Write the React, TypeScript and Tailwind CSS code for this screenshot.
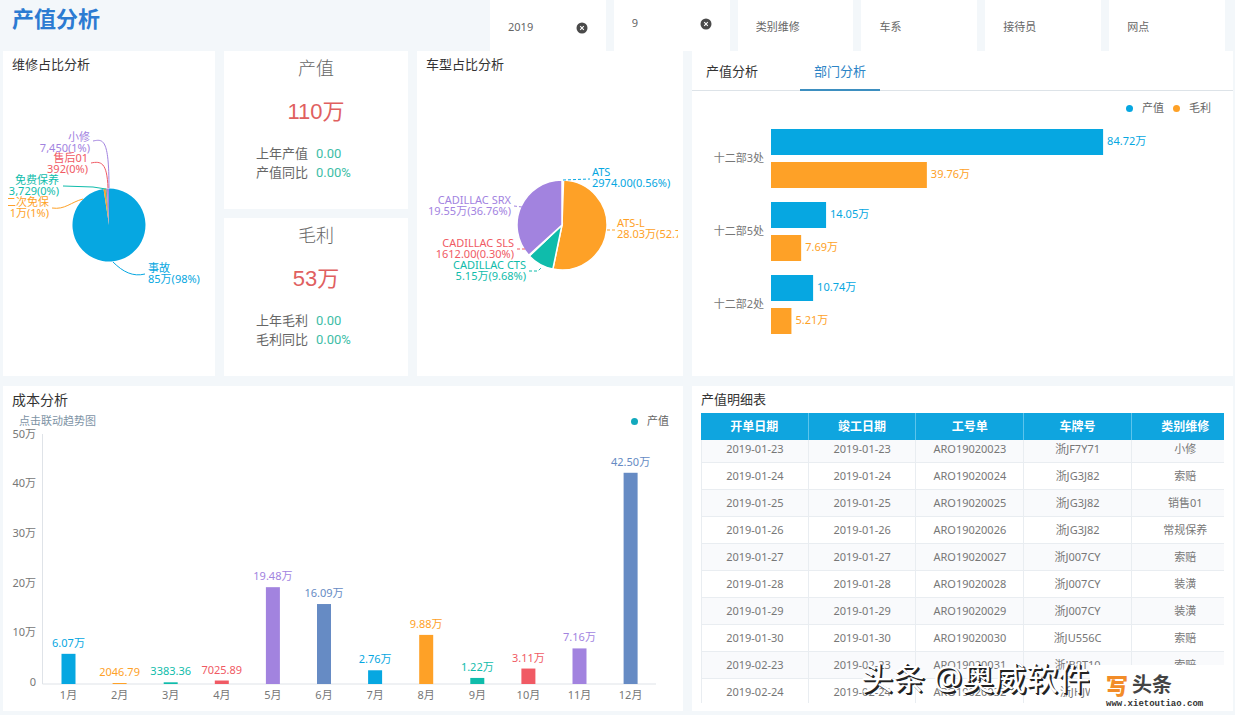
import { useState } from 'react'
import type { ReactNode } from 'react'
import { clsx } from 'clsx'

const BLUE = '#06a7e1'
const ORANGE = '#fea127'
const TEAL = '#0fbcab'
const RED = '#f05a64'
const PURPLE = '#a283df'
const STEEL = '#668bc4'

const PALETTE = [BLUE, ORANGE, TEAL, RED, PURPLE, STEEL]

const filters = [
  { id: 'year', label: '年份', initial: '2019', clearable: true },
  { id: 'month', label: '月份', initial: '9', clearable: true, raised: true },
  { id: 'category', label: '类别维修', initial: '' },
  { id: 'series', label: '车系', initial: '' },
  { id: 'receptionist', label: '接待员', initial: '' },
  { id: 'branch', label: '网点', initial: '' },
]

const departments = [
  { name: '十二部3处', output: 84.72, profit: 39.76 },
  { name: '十二部5处', output: 14.05, profit: 7.69 },
  { name: '十二部2处', output: 10.74, profit: 5.21 },
]

const months = [
  { value: 6.07, label: '6.07万' },
  { value: 0.2, label: '2046.79' },
  { value: 0.34, label: '3383.36' },
  { value: 0.7, label: '7025.89' },
  { value: 19.48, label: '19.48万' },
  { value: 16.09, label: '16.09万' },
  { value: 2.76, label: '2.76万' },
  { value: 9.88, label: '9.88万' },
  { value: 1.22, label: '1.22万' },
  { value: 3.11, label: '3.11万' },
  { value: 7.16, label: '7.16万' },
  { value: 42.5, label: '42.50万' },
]

const columns = ['开单日期', '竣工日期', '工号单', '车牌号', '类别维修']

const orders = [
  ['2019-01-23', '2019-01-23', 'ARO19020023', '浙JF7Y71', '小修'],
  ['2019-01-24', '2019-01-24', 'ARO19020024', '浙JG3J82', '索赔'],
  ['2019-01-25', '2019-01-25', 'ARO19020025', '浙JG3J82', '销售01'],
  ['2019-01-26', '2019-01-26', 'ARO19020026', '浙JG3J82', '常规保养'],
  ['2019-01-27', '2019-01-27', 'ARO19020027', '浙J007CY', '索赔'],
  ['2019-01-28', '2019-01-28', 'ARO19020028', '浙J007CY', '装潢'],
  ['2019-01-29', '2019-01-29', 'ARO19020029', '浙J007CY', '装潢'],
  ['2019-01-30', '2019-01-30', 'ARO19020030', '浙JU556C', '索赔'],
  ['2019-02-23', '2019-02-23', 'ARO19020031', '浙JB8T10', '索赔'],
  ['2019-02-24', '2019-02-24', 'ARO19020032', '浙JHJW', ''],
]

type Slice = { value: number; color: string }

type PieLabel = {
  x: number
  y: number
  lines: [string, string]
  color: string
  anchor: 'start' | 'end'
  leader: string
}

const repairSlices: Slice[] = [
  { value: 97.6, color: BLUE },
  { value: 0.9, color: ORANGE },
  { value: 0.4, color: TEAL },
  { value: 0.2, color: RED },
  { value: 0.9, color: PURPLE },
]

const repairLabels: PieLabel[] = [
  { x: 87, y: 57, lines: ['小修', '7,450(1%)'], color: PURPLE, anchor: 'end', leader: 'M90 61 C100 59 106 58 106 108' },
  { x: 85, y: 78, lines: ['售后01', '392(0%)'], color: RED, anchor: 'end', leader: 'M88 83 C98 81 104 82 105 108' },
  { x: 56, y: 100, lines: ['免费保养', '3,729(0%)'], color: TEAL, anchor: 'end', leader: 'M60 106 L90 107 L103 109' },
  { x: 46, y: 122, lines: ['二次免保', '1万(1%)'], color: ORANGE, anchor: 'end', leader: 'M49 128 C62 130 68 122 80 119' },
  { x: 145, y: 188, lines: ['事故', '85万(98%)'], color: BLUE, anchor: 'start', leader: 'M110 182 C120 192 130 197 142 194' },
]

const modelSlices: Slice[] = [
  { value: 0.56, color: BLUE },
  { value: 52.7, color: ORANGE },
  { value: 9.68, color: TEAL },
  { value: 0.3, color: RED },
  { value: 36.76, color: PURPLE },
]

const modelLabels: PieLabel[] = [
  { x: 175, y: 92, lines: ['ATS', '2974.00(0.56%)'], color: BLUE, anchor: 'start', leader: 'M146 100 L173 99' },
  { x: 200, y: 143, lines: ['ATS-L', '28.03万(52.70%)'], color: ORANGE, anchor: 'start', leader: 'M190 150 L198 150' },
  { x: 94, y: 120, lines: ['CADILLAC SRX', '19.55万(36.76%)'], color: PURPLE, anchor: 'end', leader: 'M97 126 L105 127' },
  { x: 97, y: 163, lines: ['CADILLAC SLS', '1612.00(0.30%)'], color: RED, anchor: 'end', leader: 'M100 169 L110 169' },
  { x: 109, y: 185, lines: ['CADILLAC CTS', '5.15万(9.68%)'], color: TEAL, anchor: 'end', leader: 'M112 191 L121 191 L125 187' },
]

// Paths run clockwise, starting at twelve o'clock.
function slicePaths(slices: Slice[], cx: number, cy: number, r: number) {
  const total = slices.reduce((sum, s) => sum + s.value, 0)
  let acc = 0
  return slices.map((s) => {
    const a0 = (acc / total) * Math.PI * 2
    acc += s.value
    const a1 = (acc / total) * Math.PI * 2
    const large = a1 - a0 > Math.PI ? 1 : 0
    const p = (a: number) => `${(cx + r * Math.sin(a)).toFixed(2)} ${(cy - r * Math.cos(a)).toFixed(2)}`
    return { color: s.color, d: `M${cx} ${cy} L${p(a0)} A${r} ${r} 0 ${large} 1 ${p(a1)} Z` }
  })
}

type PieProps = {
  title: string
  viewBox: string
  cx: number
  cy: number
  r: number
  slices: Slice[]
  labels: PieLabel[]
  separated?: boolean
}

function Pie({ title, viewBox, cx, cy, r, slices, labels, separated }: PieProps) {
  return (
    <div className="px-[5px]">
      <svg viewBox={viewBox} role="img" aria-label={title} className="block h-auto w-full text-[11px]">
        {slicePaths(slices, cx, cy, r).map((s) => (
          <path key={s.color} d={s.d} fill={s.color} stroke={separated ? '#fff' : 'none'} strokeWidth={1.5} />
        ))}
        {labels.map((l) => (
          <g key={l.lines[0]}>
            <path d={l.leader} fill="none" stroke={l.color} strokeDasharray={separated ? '3 2' : undefined} />
            <text x={l.x} y={l.y + 4} fill={l.color} textAnchor={l.anchor}>
              {l.lines[0]}
            </text>
            <text x={l.x} y={l.y + 15} fill={l.color} textAnchor={l.anchor}>
              {l.lines[1]}
            </text>
          </g>
        ))}
      </svg>
    </div>
  )
}

type PanelProps = { title: string; large?: boolean; className?: string; children: ReactNode }

function Panel({ title, large, className, children }: PanelProps) {
  return (
    <section className={clsx('overflow-hidden bg-white', className)}>
      <h2 className={clsx('px-[9px] leading-[27px] text-[#333]', large ? 'text-sm' : 'text-[13px]')}>{title}</h2>
      {children}
    </section>
  )
}

function Filter({ id, label, initial, clearable, raised }: (typeof filters)[number]) {
  const [value, setValue] = useState(initial)

  return (
    <div className={clsx('flex h-[51px] min-w-0 flex-1 items-center bg-white px-[18px]', raised ? 'pb-1' : 'pt-1')}>
      <input
        id={id}
        aria-label={label}
        placeholder={label}
        value={value}
        onChange={(e) => setValue(e.target.value)}
        className="w-full min-w-0 flex-1 bg-transparent text-[11px] text-[#666] outline-none placeholder:text-[#666]"
      />
      {clearable && (
        <button type="button" aria-label={`清除${label}`} onClick={() => setValue('')} className="shrink-0">
          <svg viewBox="0 0 12 12" className="size-3">
            <circle cx="6" cy="6" r="5.5" fill="#4a4a4a" />
            <path d="M4.2 4.2 L7.8 7.8 M7.8 4.2 L4.2 7.8" stroke="#fff" strokeWidth="1.1" />
          </svg>
        </button>
      )}
    </div>
  )
}

type KpiProps = { title: string; total: string; rows: [string, string][] }

function Kpi({ title, total, rows }: KpiProps) {
  return (
    <section className="flex-1 bg-white">
      <h2 className="text-center text-lg leading-[34px] font-light text-[#666]">{title}</h2>
      <p className="text-center font-['Liberation_Sans','Noto_Sans_CJK_SC',sans-serif] text-[22px] leading-[54px] text-[#e0605f]">
        {total}
      </p>
      <dl className="mt-[5px] text-[13px] leading-[19px]">
        {rows.map(([name, value]) => (
          <div key={name} className="grid grid-cols-2">
            <dt className="pr-2 text-right text-[#666]">{name}</dt>
            <dd className="font-[Roboto,sans-serif] text-[#3dbda6]">{value}</dd>
          </div>
        ))}
      </dl>
    </section>
  )
}

function Legend({ items }: { items: [string, string][] }) {
  return (
    <ul className="flex items-center gap-[9px] text-[11px] text-[#666]">
      {items.map(([name, color]) => (
        <li key={name} className="flex items-center gap-[9px]">
          <span className="size-[7px] rounded-full" style={{ backgroundColor: color }} />
          {name}
        </li>
      ))}
    </ul>
  )
}

function DepartmentChart() {
  return (
    <svg viewBox="0 0 541 251" role="img" aria-label="部门分析" className="block h-auto w-full text-[11px]">
      {departments.map((d, i) => {
        const top = 4 + i * 73
        const bars = [
          { value: d.output, color: BLUE, y: top },
          { value: d.profit, color: ORANGE, y: top + 33 },
        ]
        return (
          <g key={d.name}>
            <text x={72} y={top + 33} textAnchor="end" fill="#777">
              {d.name}
            </text>
            {bars.map((b) => (
              <g key={b.color}>
                <rect x={79} y={b.y} width={b.value * 3.92} height={26} fill={b.color} />
                <text x={83 + b.value * 3.92} y={b.y + 16} fill={b.color}>
                  {b.value.toFixed(2)}万
                </text>
              </g>
            ))}
          </g>
        )
      })}
    </svg>
  )
}

function CostChart() {
  const base = 254
  const scale = 4.97

  return (
    <svg viewBox="0 0 680 281" role="img" aria-label="成本分析" className="block h-auto w-full overflow-visible text-[11px]">
      <path d="M39.5 4 V254 H653" fill="none" stroke="#dfe3e8" />
      {[50, 40, 30, 20, 10, 0].map((tick) => (
        <text key={tick} x={33} y={base + 2 - tick * scale} textAnchor="end" fill="#777">
          {tick === 0 ? '0' : `${tick}万`}
        </text>
      ))}
      {months.map((m, i) => {
        const x = 65.5 + i * 51.1
        const height = m.value * scale
        const color = PALETTE[i % PALETTE.length]
        return (
          <g key={m.label}>
            <rect x={x - 7} y={base - height} width={14} height={height} fill={color} />
            <text x={x} y={base - height - 7} textAnchor="middle" fill={color}>
              {m.label}
            </text>
            <text x={x} y={269} textAnchor="middle" fill="#777">
              {i + 1}月
            </text>
          </g>
        )
      })}
    </svg>
  )
}

function OrderTable() {
  return (
    <div className="mx-[9px] h-[290px] overflow-hidden">
      <table className="w-[103%] table-fixed border-separate border-spacing-0 text-center">
        <thead>
          <tr className="h-[27px] bg-[#0fa5df] text-xs text-white">
            {columns.map((c) => (
              <th key={c} scope="col" className="border-r border-[#5cc4ec] p-0 font-bold">
                {c}
              </th>
            ))}
          </tr>
        </thead>
        <tbody className="text-[11px] leading-4 text-[#777]">
          {orders.map((row) => (
            <tr key={row[2]} className="group h-[27px] first:h-[23px] odd:bg-[#f9fafc]">
              {row.map((cell, i) => (
                <td key={i} className="border-r border-b border-[#e9edf1] p-0 group-first:pb-1 first:border-l">
                  {cell}
                </td>
              ))}
            </tr>
          ))}
        </tbody>
      </table>
    </div>
  )
}

function Watermark() {
  return (
    <div className="pointer-events-none absolute right-[9px] bottom-2 flex items-end">
      <p className="text-[32px] leading-[50px] whitespace-nowrap text-white [text-shadow:2px_2px_0_#222,1px_1px_0_#222]">
        头条 @奥威软件
      </p>
      <div className="flex h-[38px] w-[134px] flex-col bg-white pt-[5px] pl-4">
        <p className="flex items-center gap-1 font-['Noto_Sans_CJK_SC',sans-serif] leading-5">
          <span className="text-[22px] font-black text-[#f28c28]">写</span>
          <span className="text-xl font-bold text-[#444]">头条</span>
        </p>
        <p className="font-['Liberation_Mono',monospace] text-[9px] leading-3 font-bold text-[#333]">
          www.xietoutiao.com
        </p>
      </div>
    </div>
  )
}

export default function App() {
  const [tab, setTab] = useState('部门分析')

  return (
    <div className="min-h-screen bg-[#f3f7fa] pb-1 font-['Noto_Sans','Noto_Sans_CJK_SC',sans-serif]">
      <header className="flex pr-[10px]">
        <h1 className="w-[490px] shrink-0 pl-3 text-[22px] leading-9 font-bold text-[#2c7bd2]">产值分析</h1>
        <div className="flex min-w-0 flex-1 gap-2">
          {filters.map((f) => (
            <Filter key={f.id} {...f} />
          ))}
        </div>
      </header>

      <main className="grid grid-cols-[minmax(0,212fr)_minmax(0,184fr)_minmax(0,266fr)_minmax(0,541fr)] gap-x-[9px] gap-y-[10px] pr-0.5 pl-[3px]">
        <Panel title="维修占比分析">
          <Pie
            title="维修占比分析"
            viewBox="5 -2 202 298"
            cx={106}
            cy={145}
            r={36.5}
            slices={repairSlices}
            labels={repairLabels}
          />
        </Panel>

        <div className="flex flex-col gap-[9px]">
          <Kpi title="产值" total="110万" rows={[['上年产值', '0.00'], ['产值同比', '0.00%']]} />
          <Kpi title="毛利" total="53万" rows={[['上年毛利', '0.00'], ['毛利同比', '0.00%']]} />
        </div>

        <Panel title="车型占比分析">
          <Pie
            title="车型占比分析"
            viewBox="5 -2 256 298"
            cx={145}
            cy={145}
            r={45}
            slices={modelSlices}
            labels={modelLabels}
            separated
          />
        </Panel>

        <section className="bg-white">
          <div role="tablist" className="flex h-10 gap-7 border-b border-[#dde3e8]">
            {['产值分析', '部门分析'].map((t) => (
              <button
                key={t}
                type="button"
                role="tab"
                aria-selected={tab === t}
                onClick={() => setTab(t)}
                className={clsx(
                  '-mb-px w-20 border-b-2 pt-1 text-[13px]',
                  tab === t ? 'border-[#3d8fc0] text-[#2d84c6]' : 'border-transparent text-[#333]',
                )}
              >
                {t}
              </button>
            ))}
          </div>
          <div className="flex h-[34px] items-center justify-end pr-[22px]">
            <Legend items={[['产值', BLUE], ['毛利', ORANGE]]} />
          </div>
          <DepartmentChart />
        </section>

        <Panel title="成本分析" large className="col-span-3">
          <div className="flex h-[17px] items-center justify-between pr-[14px] pl-4">
            <p className="text-[11px] text-[#7d93a5]">点击联动趋势图</p>
            <Legend items={[['产值', '#12a9bd']]} />
          </div>
          <CostChart />
        </Panel>

        <Panel title="产值明细表" className="relative">
          <OrderTable />
          <Watermark />
        </Panel>
      </main>
    </div>
  )
}
